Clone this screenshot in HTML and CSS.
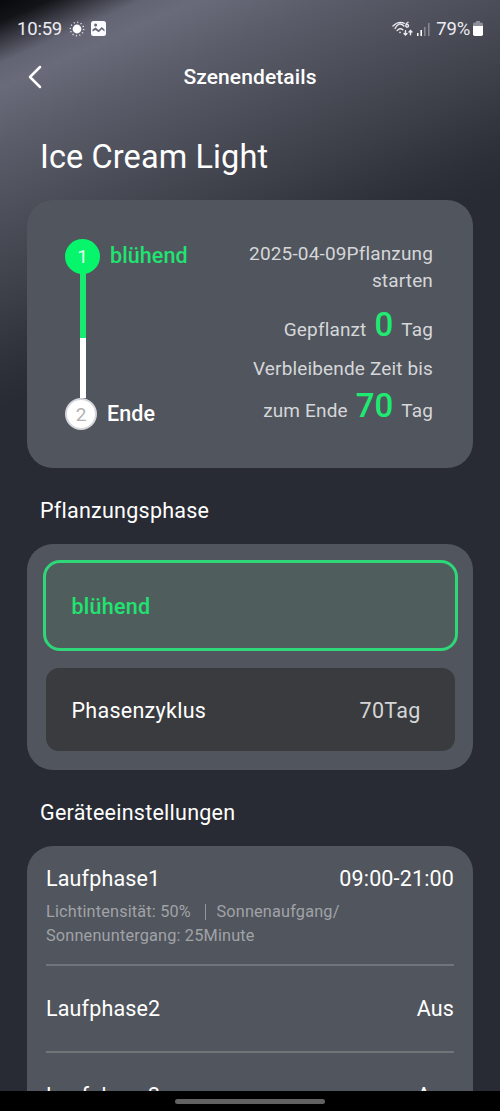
FILE: index.html
```html
<!DOCTYPE html>
<html lang="de">
<head>
<meta charset="utf-8">
<title>Szenendetails</title>
<link rel="stylesheet" href="styles.css">
</head>
<body>
<div class="screen">
  <div class="status">
    <span class="clock">10:59</span>
    <svg class="sun" width="16" height="16" viewBox="0 0 16 16"><circle cx="8" cy="8" r="4.4" fill="#fff"/><circle cx="8" cy="8" r="6.7" fill="none" stroke="#e4e4ee" stroke-width="1.5" stroke-dasharray="1.1 2.408"/></svg>
    <svg class="photo" width="15" height="15" viewBox="0 0 15 15"><rect width="15" height="15" rx="2.5" fill="#fafaff"/><path d="M1.500 8.500 4.500 6.500 7.700 9 10.800 6 13.500 8.500V10.500L10.800 8.300 7.700 11.300 4.500 9 1.500 10.500Z" fill="#656775"/><circle cx="4.600" cy="4" r="1.500" fill="#656775"/></svg>
    <span class="spacer"></span>
    <svg class="wifi" width="22" height="16" viewBox="0 0 22 16" fill="none" stroke="#e9e9ee" stroke-width="1.4" stroke-linecap="round"><path d="M1 5Q6.500-.5 12.300 2.300M3 7.500Q7-.1 12 5M5.100 9.600Q8 6.300 10.800 8.800"/><circle cx="8" cy="11.400" r=".8" fill="#e9e9ee" stroke="none"/><path d="M16 1.300Q13.800 2.300 13.800 4.600M13.800 4.700a1.350 1.350 0 1 0 2.700 0a1.350 1.350 0 1 0-2.700 0M13.500 9.700v4M12 12.400l1.500 1.600 1.500-1.600M18.500 13.800v-4M17 11.100l1.500-1.600 1.500 1.600" stroke-width="1.400"/></svg>
    <svg class="signal" width="13" height="13" viewBox="0 0 13 13"><path d="M0 10h1.500v3H0zM3.400 7h1.600v6H3.400z" fill="#fff"/><path d="M7 4h1.600v9H7zM11 0h1.600v13H11z" fill="#85868f"/></svg>
    <span class="percent">79%</span>
    <svg class="battery" width="10" height="15" viewBox="0 0 10 15"><path d="M3 0h4v1.500h1.500A1.500 1.500 0 0 1 10 3v3H0V3a1.500 1.500 0 0 1 1.500-1.500H3Z" fill="#8e8f96"/><path d="M0 5h10v8.300A1.700 1.700 0 0 1 8.300 15H1.700A1.700 1.700 0 0 1 0 13.300Z" fill="#fff"/></svg>
  </div>
  <header class="nav">
    <svg class="back" width="16" height="24" viewBox="0 0 16 24"><path d="M13 2 3 12l10 10" fill="none" stroke="#fff" stroke-width="2.5" stroke-linecap="round" stroke-linejoin="round"/></svg>
    <h1 class="nav-title">Szenendetails</h1>
  </header>
  <h2 class="scene">Ice Cream Light</h2>
  <section class="card progress">
    <div class="steps">
      <div class="step"><span class="dot active">1</span><span class="label green">blühend</span></div>
      <div class="track"></div>
      <div class="step last"><span class="dot">2</span><span class="label">Ende</span></div>
    </div>
    <div class="facts">
      <p class="date">2025-04-09Pflanzung<br>starten</p>
      <p class="count">Gepflanzt<b>0</b>Tag</p>
      <p class="remain">Verbleibende Zeit bis</p>
      <p class="count end">zum Ende<b>70</b>Tag</p>
    </div>
  </section>
  <h3 class="heading">Pflanzungsphase</h3>
  <section class="card phases">
    <div class="phase selected">blühend</div>
    <div class="phase"><span>Phasenzyklus</span><span class="value">70Tag</span></div>
  </section>
  <h3 class="heading">Geräteeinstellungen</h3>
  <section class="card device">
    <div class="run first">
      <div class="row"><span>Laufphase1</span><span class="time">09:00-21:00</span></div>
      <p class="detail">Lichtintensität: 50%<i class="bar"></i>Sonnenaufgang/<br>Sonnenuntergang: 25Minute</p>
    </div>
    <div class="run row"><span>Laufphase2</span><span>Aus</span></div>
    <div class="run row"><span>Laufphase3</span><span>Aus</span></div>
  </section>
</div>
<footer class="gesture"><span class="pill"></span></footer>
</body>
</html>
```
FILE: styles.css
```css
* { box-sizing: border-box; }
body {
  margin: 0;
  width: 500px;
  height: 1111px;
  overflow: hidden;
  background: #000;
  color: #fff;
  font-family: Roboto, sans-serif;
  font-size: 21.5px;
  letter-spacing: 0.15px;
}
h1, h2, h3, p { margin: 0; font-weight: 400; }
.screen {
  height: 1091px;
  overflow: hidden;
  background: linear-gradient(156deg, #08090b 0, #131418 20px, #393a43 38px, #626473 58px, #696b7a 80px, #5a5c69 135px, #4b4d58 205px, #3b3d47 280px, #2c2f37 345px, #282b33 375px);
}
.status {
  display: flex;
  align-items: center;
  height: 57px;
  padding: 0 17px;
  font-size: 18.5px;
  letter-spacing: -0.2px;
  color: #ececf2;
}
.sun { margin-left: 7px; }
.photo { margin-left: 6px; }
.spacer { flex: 1; }
.signal { margin: 1px 6px 0 3px; }
.battery { margin-left: 3px; }
.nav {
  display: grid;
  grid-template-columns: 60px 1fr 60px;
  align-items: center;
  height: 40px;
}
.back { margin-left: 27px; }
.nav-title {
  text-align: center;
  font-size: 21px;
  font-weight: 500;
  letter-spacing: 0.1px;
}
.scene {
  padding: 40px 40px 0;
  height: 103px;
  font-size: 32.5px;
  line-height: 40px;
  letter-spacing: 0.1px;
}
.card {
  margin: 0 27px;
  border-radius: 26px;
  background: #51555d;
}
.progress {
  display: flex;
  justify-content: space-between;
  height: 268px;
  padding: 39px 40px 0 38px;
}
.step { display: flex; align-items: center; height: 34px; gap: 10px; }
.dot {
  display: grid;
  place-items: center;
  width: 32px;
  height: 32px;
  border: 2px solid #d5d5db;
  border-radius: 50%;
  background: #fff;
  color: #b0b0b0;
  font-size: 19px;
  letter-spacing: 0;
}
.dot.active { width: 35px; height: 35px; border: 0; background: #07f56b; color: #e6ffee; }
.label { margin-top: -2px; font-weight: 500; font-size: 21.5px; letter-spacing: 0.1px; }
.green { color: #20e471; }
.track {
  width: 6px;
  height: 125px;
  margin-left: 15px;
  background: linear-gradient(#18ec70 65px, #fff 65px);
}
.step.last { height: 32px; }
.facts {
  color: #d5d7da;
  text-align: right;
  font-size: 19px;
  line-height: 27px;
  letter-spacing: 0.15px;
}
.date { padding-top: 1px; }
.count { height: 40px; margin-top: 11px; line-height: 40px; }
.count b { margin: 0 8px; font-size: 33px; font-weight: 500; letter-spacing: 0; color: #1eea71; }
.remain { margin-top: 10px; }
.count.end { margin-top: 4px; }
.heading { height: 76px; padding: 29px 40px 0; font-size: 21.5px; line-height: 28px; letter-spacing: 0.25px; }
.phases { display: grid; justify-content: center; align-content: start; gap: 17px; height: 226px; padding-top: 16px; }
.phase {
  display: flex;
  align-items: center;
  justify-content: space-between;
  justify-self: center;
  width: 409px;
  height: 83px;
  padding: 1px 34px 0 26px;
  border-radius: 13px;
  background: #393b3e;
  letter-spacing: 0.27px;
}
.phase.selected {
  width: 415px;
  height: 91px;
  border: 3px solid #2ed777;
  border-radius: 17px;
  background: #4f5e5c;
  color: #20e471;
  font-weight: 500;
}
.value { color: #d5d6d7; }
.device { padding: 0 19px; height: 300px; }
.row { display: flex; justify-content: space-between; align-items: center; }
.run { height: 87px; border-bottom: 2px solid #6f7578; }
.run.first { height: 120px; padding-top: 17px; }
.run.first .row { height: 30px; }
.detail { margin-top: 7px; font-size: 16.3px; line-height: 24px; letter-spacing: 0.17px; color: #a0a3a7; }
.bar { display: inline-block; width: 1.5px; height: 16px; margin: 0 10px 0 14px; background: #94979b; vertical-align: -3px; }
.gesture { display: flex; justify-content: center; height: 20px; padding-top: 8px; }
.pill { width: 150px; height: 5px; border-radius: 3px; background: #626262; }
```
